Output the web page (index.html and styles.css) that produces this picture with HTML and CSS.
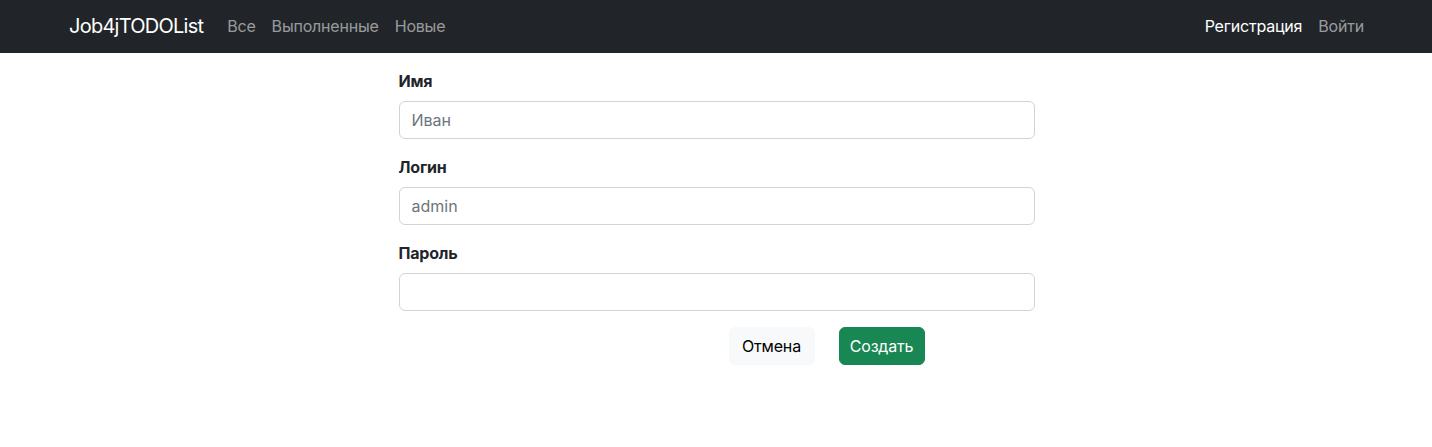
FILE: index.html
```html
<!DOCTYPE html>
<html lang="ru">
<head>
<meta charset="utf-8">
<title>Job4jTODOList</title>
<link rel="stylesheet" href="styles.css">
</head>
<body>
<nav class="navbar">
  <div class="nav-container">
    <div class="nav-left">
      <a class="brand" href="#">Job4jTODOList</a>
      <a class="nav-link" href="#">Все</a>
      <a class="nav-link" href="#">Выполненные</a>
      <a class="nav-link" href="#">Новые</a>
    </div>
    <div class="nav-right">
      <a class="nav-link active" href="#">Регистрация</a>
      <a class="nav-link" href="#">Войти</a>
    </div>
  </div>
</nav>
<main class="page">
  <form class="form">
    <div class="field">
      <label class="label" for="name">Имя</label>
      <input class="input" id="name" type="text" placeholder="Иван">
    </div>
    <div class="field">
      <label class="label" for="login">Логин</label>
      <input class="input" id="login" type="text" placeholder="admin">
    </div>
    <div class="field">
      <label class="label" for="password">Пароль</label>
      <input class="input" id="password" type="password">
    </div>
    <div class="actions">
      <button class="btn btn-light" type="button">Отмена</button>
      <button class="btn btn-success" type="submit">Создать</button>
    </div>
  </form>
</main>
</body>
</html>
```
FILE: styles.css
```css
* { box-sizing: border-box; }
html, body { margin: 0; padding: 0; }
body {
  font-family: Inter, "Noto Sans", "Liberation Sans", sans-serif;
  font-size: 16px;
  line-height: 24px;
  color: #212529;
  background: #fff;
}
a { text-decoration: none; }

.navbar {
  background: #212529;
  height: 53px;
}
.nav-container {
  width: 1320px;
  margin: 0 auto;
  padding: 0 12px 1px;
  height: 100%;
  display: flex;
  align-items: center;
  justify-content: space-between;
}
.nav-left, .nav-right { display: flex; align-items: center; }
.nav-right { margin-right: -8px; }
.brand {
  color: #fff;
  font-size: 20px;
  line-height: 30px;
  margin-left: 1px;
  margin-right: 16px;
  letter-spacing: -0.75px;
}
.nav-link {
  color: rgba(255,255,255,0.55);
  padding: 8px 8px;
  letter-spacing: -0.2px;
}
.nav-link.active { color: #fff; }

.page {
  display: flex;
  justify-content: center;
  padding-top: 16px;
}
.form { width: 636px; margin-left: 1px; }
.field { margin-bottom: 16px; }
.label {
  display: block;
  font-weight: 700;
  margin-bottom: 8px;
  letter-spacing: -0.2px;
}
.input {
  display: block;
  width: 100%;
  height: 38px;
  padding: 6px 12px;
  font: inherit;
  color: #212529;
  border: 1px solid #ced4da;
  border-radius: 6px;
  background: #fff;
}
.input::placeholder { color: #6c757d; opacity: 1; }

.actions {
  display: grid;
  grid-template-columns: repeat(6, minmax(0, 1fr));
  column-gap: 24px;
}
.btn {
  width: 100%;
  height: 38px;
  font: inherit;
  border: 1px solid transparent;
  border-radius: 6px;
  padding: 6px 4px;
  letter-spacing: -0.2px;
  white-space: nowrap;
}
.btn-light { grid-column: 4; background: #f8f9fa; border-color: #f8f9fa; color: #000; }
.btn-success { grid-column: 5; background: #198754; border-color: #198754; color: #fff; }
```
